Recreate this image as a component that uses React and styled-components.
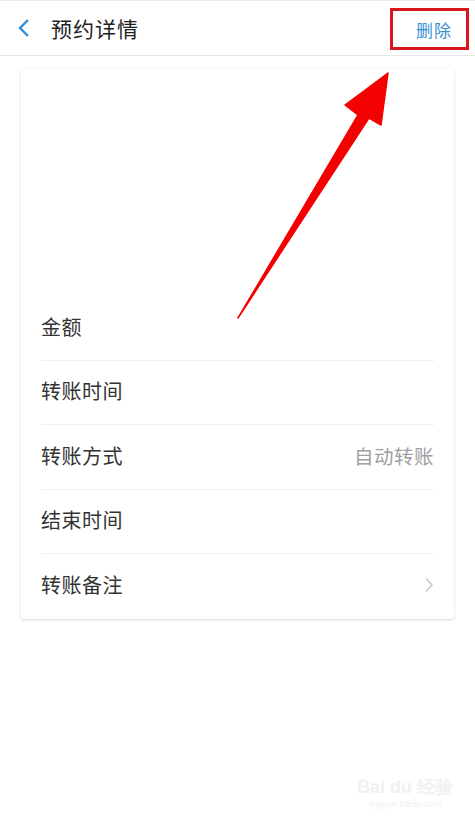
import React from "react";
import styled, { createGlobalStyle } from "styled-components";

const GlobalStyle = createGlobalStyle`
  html, body {
    margin: 0;
    padding: 0;
    background: #ffffff;
  }
  body {
    font-family: "Noto Sans CJK SC", "Noto Sans", sans-serif;
  }
`;

const Page = styled.div`
  position: relative;
  width: 475px;
  height: 817px;
  overflow: hidden;
  background: #ffffff;
  border-top: 1px solid #ececec;
  box-sizing: border-box;
`;

const Header = styled.div`
  display: flex;
  align-items: center;
  height: 55px;
  padding: 0 6px 0 17px;
  border-bottom: 1px solid #e6e6ea;
  box-sizing: border-box;
`;

const BackButton = styled.div`
  display: flex;
  align-items: center;
  width: 16px;
  height: 22px;
  margin-right: 18px;
`;

const Title = styled.div`
  flex: 1;
  font-size: 21px;
  color: #222;
  letter-spacing: 1px;
  line-height: 1;
`;

const DeleteButton = styled.div`
  display: flex;
  align-items: center;
  justify-content: flex-end;
  width: 79px;
  height: 42px;
  padding-right: 14px;
  box-sizing: border-box;
  border: 3px solid #d7161d;
  color: #3a93d2;
  font-size: 17px;
  letter-spacing: 1px;
  margin-top: 2px;
`;

const Card = styled.div`
  margin: 12px 21px 0 21px;
  background: #fff;
  border-radius: 3px;
  box-shadow: 0 1px 3px rgba(0, 0, 0, 0.14), 0 0 1px rgba(0, 0, 0, 0.08);
  padding: 228px 20px 0 20px;
`;

const Row = styled.div`
  display: flex;
  align-items: center;
  justify-content: space-between;
  height: 64.5px;
  padding-bottom: 3px;
  border-bottom: ${p => (p.$last ? "none" : "1px solid #f0f0f2")};
  box-sizing: border-box;
`;

const Label = styled.div`
  font-size: 20px;
  color: #333;
  letter-spacing: 0.5px;
`;

const Value = styled.div`
  font-size: 19.5px;
  color: #a0a0a0;
  letter-spacing: 0.5px;
`;

const Arrow = styled.svg`
  position: absolute;
  left: 0;
  top: 0;
  pointer-events: none;
`;

const Watermark = styled.div`
  position: absolute;
  right: 22px;
  bottom: 8px;
  text-align: center;
  color: #f1f1f1;
  font-family: "Liberation Sans", sans-serif;
`;

const WatermarkTitle = styled.div`
  font-size: 18px;
  font-weight: bold;
`;

const WatermarkUrl = styled.div`
  font-size: 9px;
`;

const rows = [
  { label: "金额" },
  { label: "转账时间" },
  { label: "转账方式", value: "自动转账" },
  { label: "结束时间" },
  { label: "转账备注", chevron: true }
];

export default function App() {
  return (
    <Page>
      <GlobalStyle />
      <Header>
        <BackButton>
          <svg width="14" height="20" viewBox="0 0 14 20">
            <path d="M11 2 L3 10 L11 18" fill="none" stroke="#2a8fd8" strokeWidth="2.4" />
          </svg>
        </BackButton>
        <Title>预约详情</Title>
        <DeleteButton>删除</DeleteButton>
      </Header>
      <Card>
        {rows.map((r, i) => (
          <Row key={r.label} $last={i === rows.length - 1}>
            <Label>{r.label}</Label>
            {r.value && <Value>{r.value}</Value>}
            {r.chevron && (
              <svg width="10" height="16" viewBox="0 0 10 16">
                <path d="M2 1.5 L8 8 L2 14.5" fill="none" stroke="#c4c4c8" strokeWidth="1.4" />
              </svg>
            )}
          </Row>
        ))}
      </Card>
      <Arrow width="475" height="817" viewBox="0 0 475 817">
        <path
          d="M238 317 L358 114 L345 104 L388 72 L381 124 L369 117 Z"
          fill="#f30000"
          strokeLinejoin="round"
          stroke="#f30000"
          strokeWidth="1.5"
        />
      </Arrow>
      <Watermark>
        <WatermarkTitle>Bai du 经验</WatermarkTitle>
        <WatermarkUrl>jingyan.baidu.com</WatermarkUrl>
      </Watermark>
    </Page>
  );
}
